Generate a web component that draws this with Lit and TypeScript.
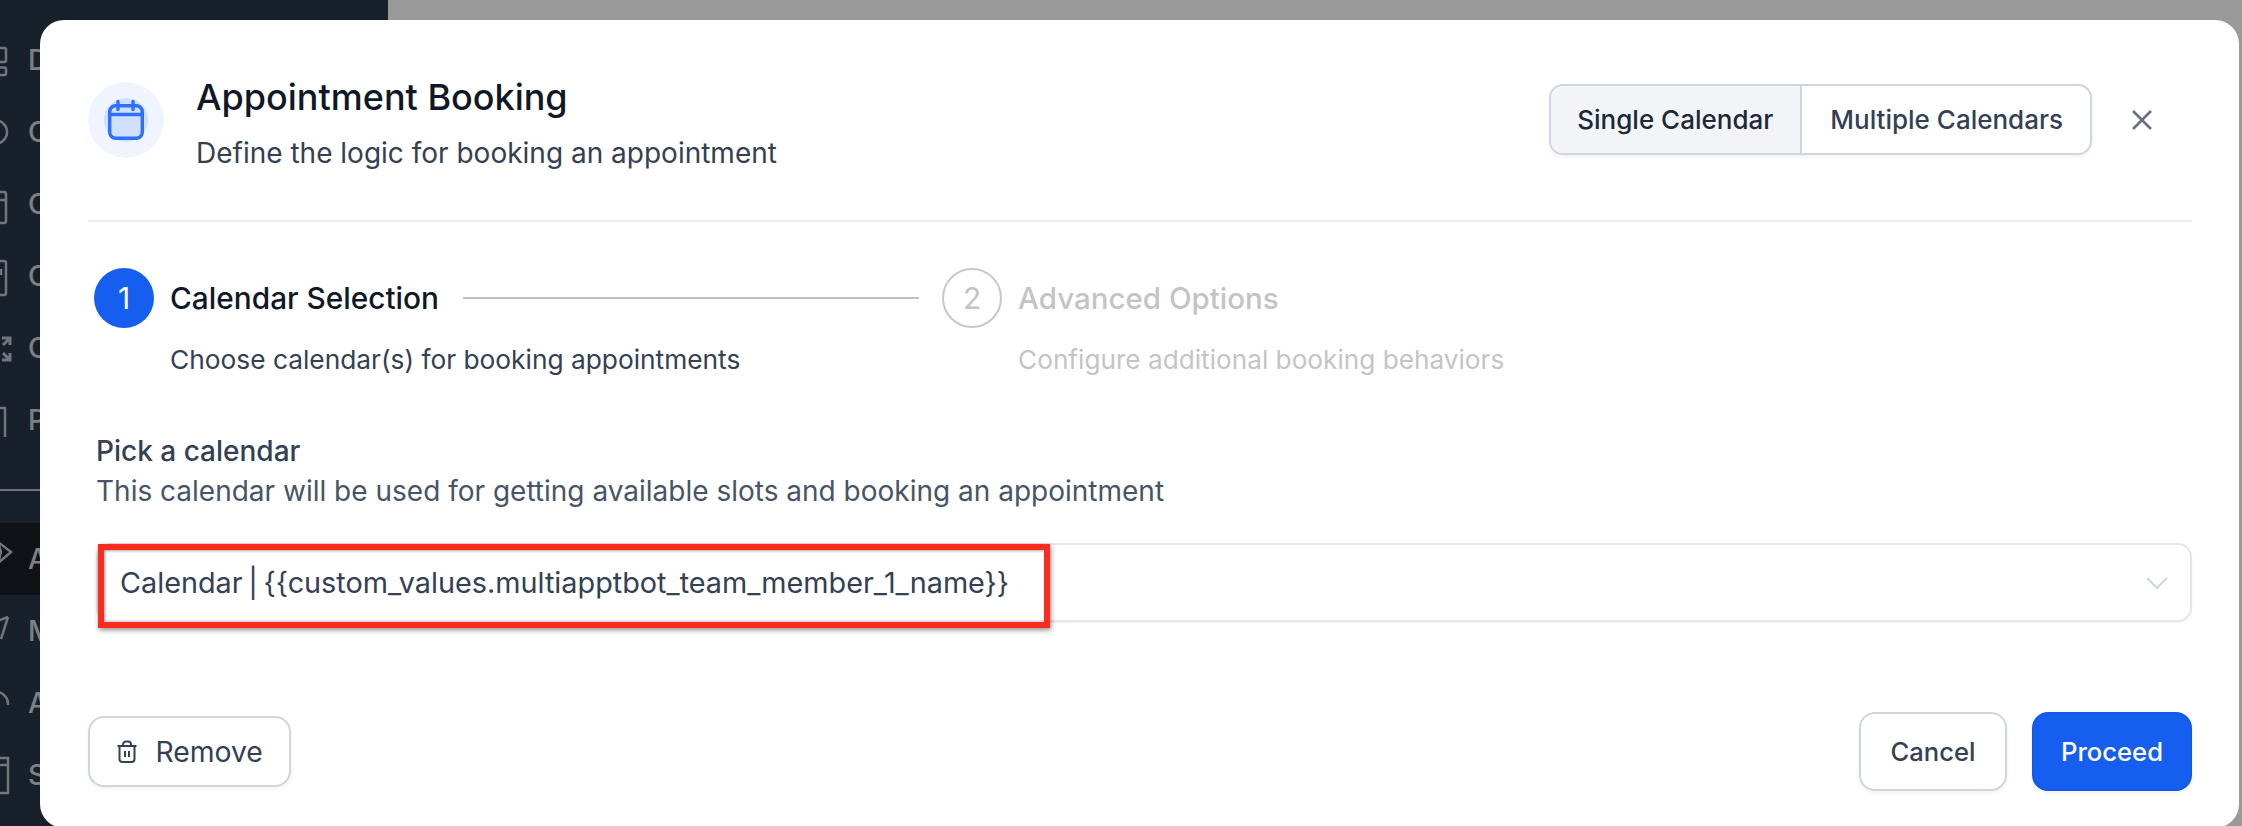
import { LitElement, html, css, svg } from 'lit';
import { customElement } from 'lit/decorators.js';

const navTop = [
    { label: 'Dashboard', icon: svg`<rect x="-8" y="3" width="14" height="14" rx="1.5"/><rect x="-8" y="22.5" width="14" height="7.5" rx="1.5"/>` },
    { label: 'Conversations', icon: svg`<circle cx="-5" cy="15" r="12"/>` },
    { label: 'Calendars', icon: svg`<rect x="-10" y="3" width="16" height="31" rx="2"/><path d="M-10 11H6"/>` },
    { label: 'Contacts', icon: svg`<rect x="-10" y="0" width="16" height="34" rx="2"/><path d="M1 8v6"/>` },
    { label: 'Opportunities', icon: svg`<path stroke-width="3" d="M2 5h8v7M10 5l-7 7M2 27h8v-7M10 27l-7-7"/>` },
    { label: 'Payments', icon: svg`<path d="M-6 3H6M5 3v29"/>` },
];
const navBottom = [
    { label: 'AI Agents', active: true, icon: svg`<path d="M-2 -2L11 8-2 19l3-11z"/>` },
    { label: 'Marketing', active: false, icon: svg`<path d="M8 1L1 23M8 1L-8 7"/>` },
    { label: 'Automation', active: false, icon: svg`<path d="M-4 4a12 12 0 0 1 12 13"/>` },
    { label: 'Sites', active: false, icon: svg`<path d="M-10-2H8v35H-10M-10 5H8"/>` },
];

@customElement('app-root')
export class AppRoot extends LitElement {
    static styles = css`
        :host {
            display: block;
            position: relative;
            width: 2242px;
            height: 826px;
            overflow: hidden;
            background: #999a99;
            font-family: Inter, 'Liberation Sans', sans-serif;
        }
        .sidebar {
            width: 388px;
            height: 826px;
            background: #18202c;
            color: #7d8084;
            font-size: 28px;
            font-weight: 500;
            box-sizing: border-box;
            padding-top: 24px;
        }
        .nav-item {
            display: flex;
            align-items: center;
            height: 72px;
            white-space: nowrap;
        }
        .nav-item svg {
            width: 30px;
            height: 30px;
            margin-right: -2px;
            fill: none;
            stroke: #72757a;
            stroke-width: 2.5;
            overflow: visible;
            flex: none;
        }
        .nav-item.active {
            background: #0f1216;
        }
        .nav-rule {
            height: 2px;
            background: #6d7074;
            margin: 33px 0 32px;
        }
        .modal {
            position: absolute;
            left: 40px;
            top: 20px;
            width: 2199px;
            height: 808px;
            box-sizing: border-box;
            padding: 62px 47px 0 48px;
            background: #fff;
            border-radius: 24px;
            display: flex;
            flex-direction: column;
        }
        .header {
            display: flex;
            align-items: flex-start;
            height: 138px;
            border-bottom: 2px solid #eaecf0;
        }
        .icon-halo {
            width: 76px;
            height: 76px;
            border-radius: 50%;
            background: #eff4ff;
            display: flex;
            align-items: center;
            justify-content: center;
            flex: none;
        }
        .icon-halo .inner {
            width: 44px;
            height: 44px;
            border-radius: 50%;
            background: #d1e0ff;
            display: flex;
            align-items: center;
            justify-content: center;
        }
        .titles {
            margin-left: 32px;
            flex: 1;
        }
        h1 {
            margin: -7px 0 0;
            font-size: 36px;
            line-height: 44px;
            font-weight: 500;
            color: #101828;
        }
        .titles p {
            margin: 15px 0 0;
            font-size: 28px;
            line-height: 38px;
            color: #344054;
        }
        .toggle {
            display: flex;
            height: 71px;
            box-sizing: border-box;
            margin-top: 2px;
            border: 2px solid #d0d5dd;
            border-radius: 14px;
            overflow: hidden;
            box-shadow: 0 2px 4px rgba(16, 24, 40, 0.06);
            font-size: 26px;
            font-weight: 500;
            color: #344054;
        }
        .toggle div {
            display: flex;
            align-items: center;
            padding: 0 27px 0 28px;
        }
        .toggle .on {
            padding: 0 27px 0 26px;
            background: #f2f4f7;
            color: #1d2939;
            border-right: 2px solid #d0d5dd;
        }
        .close {
            width: 28px;
            height: 28px;
            margin: 24px 36px 0 36px;
            stroke: #667085;
            stroke-width: 2.6;
            fill: none;
            flex: none;
        }
        .steps {
            display: flex;
            margin: 46px 0 0 6px;
        }
        .step {
            display: grid;
            grid-template-columns: 60px auto;
            column-gap: 16px;
            align-items: center;
        }
        .dot {
            width: 60px;
            height: 60px;
            box-sizing: border-box;
            border-radius: 50%;
            background: #155eef;
            color: #fff;
            font-size: 30px;
            display: flex;
            align-items: center;
            justify-content: center;
        }
        .step-title {
            font-size: 29.8px;
            font-weight: 500;
            color: #101828;
            white-space: nowrap;
        }
        /* width 0 so the longer sub text runs under the connector line, not pushing it */
        .step-sub {
            grid-column: 2;
            width: 0;
            margin-top: 16px;
            font-size: 26.3px;
            line-height: 32px;
            color: #344054;
            white-space: nowrap;
        }
        .step.off .dot {
            background: transparent;
            border: 2px solid #c8c8c8;
            color: #c4c4c4;
        }
        .step.off .step-title {
            font-size: 29.5px;
            color: #c4c4c4;
        }
        .step.off .step-sub {
            font-size: 26.2px;
            color: #c4c4c4;
        }
        .line {
            width: 456px;
            height: 2px;
            margin: 29px 23px 0 24px;
            background: #c0c0c0;
        }
        .field {
            margin: 57px 0 0 8px;
        }
        .field-label {
            font-size: 28px;
            line-height: 36px;
            font-weight: 500;
            color: #344054;
        }
        .field-hint {
            margin-top: 4px;
            font-size: 28px;
            line-height: 36px;
            color: #475467;
        }
        .select {
            position: relative;
            display: flex;
            align-items: center;
            justify-content: space-between;
            height: 79px;
            box-sizing: border-box;
            margin-top: 34px;
            padding: 0 22px;
            border: 2px solid #e4e7ec;
            border-radius: 14px;
            box-shadow: 0 1px 2px rgba(16, 24, 40, 0.05);
            font-size: 28.8px;
            word-spacing: -2.5px;
            color: #344054;
        }
        .select svg {
            width: 22px;
            height: 12px;
            stroke: #d0d5dd;
            stroke-width: 2;
            fill: none;
        }
        .highlight {
            position: absolute;
            left: 0;
            top: -1px;
            width: 952px;
            height: 84px;
            box-sizing: border-box;
            border: 6px solid #fb2c1e;
            box-shadow: 1px 2px 5px rgba(0, 0, 0, 0.45), inset 1px 1px 3px rgba(0, 0, 0, 0.35);
        }
        .footer {
            display: flex;
            align-items: center;
            margin-top: 90px;
        }
        .btn {
            display: flex;
            align-items: center;
            justify-content: center;
            box-sizing: border-box;
            border: 2px solid #d0d5dd;
            border-radius: 16px;
            background: #fff;
            box-shadow: 0 2px 4px rgba(16, 24, 40, 0.06);
            font-size: 25.6px;
            font-weight: 500;
            color: #344054;
        }
        .remove {
            justify-content: flex-start;
            width: 203px;
            height: 71px;
            padding-left: 25px;
            gap: 16.5px;
            font-size: 28.3px;
            font-weight: 400;
        }
        .remove svg {
            width: 24px;
            height: 24px;
            stroke: #344054;
            stroke-width: 2;
            fill: none;
        }
        .cancel {
            width: 148px;
            height: 79px;
            margin-left: auto;
        }
        .proceed {
            width: 160px;
            height: 79px;
            margin-left: 25px;
            background: #155eef;
            border-color: #0f5be8;
            color: #fff;
        }
    `;

    render() {
        return html`
            <div class="sidebar">
                ${navTop.map(item => html`
                    <div class="nav-item"><svg viewBox="0 0 30 30">${item.icon}</svg>${item.label}</div>
                `)}
                <div class="nav-rule"></div>
                ${navBottom.map(item => html`
                    <div class="nav-item ${item.active ? 'active' : ''}"><svg viewBox="0 0 30 30">${item.icon}</svg>${item.label}</div>
                `)}
            </div>
            <div class="modal">
                <div class="header">
                    <div class="icon-halo">
                        <div class="inner">
                            <svg width="40" height="44" viewBox="0 0 40 44" fill="none" stroke="#2e6fff" stroke-width="3.4" stroke-linecap="round">
                                <rect x="3.7" y="7.7" width="32.6" height="32.6" rx="6"/>
                                <path d="M3.7 16.5h32.6M12 3.5v8M27 3.5v8"/>
                            </svg>
                        </div>
                    </div>
                    <div class="titles">
                        <h1>Appointment Booking</h1>
                        <p>Define the logic for booking an appointment</p>
                    </div>
                    <div class="toggle">
                        <div class="on">Single Calendar</div>
                        <div>Multiple Calendars</div>
                    </div>
                    <svg class="close" viewBox="0 0 28 28"><path d="M5 5l18 18M23 5L5 23"/></svg>
                </div>
                <div class="steps">
                    <div class="step">
                        <div class="dot">1</div>
                        <div class="step-title">Calendar Selection</div>
                        <div class="step-sub">Choose calendar(s) for booking appointments</div>
                    </div>
                    <div class="line"></div>
                    <div class="step off">
                        <div class="dot">2</div>
                        <div class="step-title">Advanced Options</div>
                        <div class="step-sub">Configure additional booking behaviors</div>
                    </div>
                </div>
                <div class="field">
                    <div class="field-label">Pick a calendar</div>
                    <div class="field-hint">This calendar will be used for getting available slots and booking an appointment</div>
                    <div class="select">
                        <span>Calendar | {{custom_values.multiapptbot_team_member_1_name}}</span>
                        <svg viewBox="0 0 22 12"><path d="M1 1l10 10L21 1"/></svg>
                        <div class="highlight"></div>
                    </div>
                </div>
                <div class="footer">
                    <div class="btn remove">
                        <svg viewBox="0 0 24 24"><path d="M2.5 6h19M8 6V4.5a3 3 0 0 1 3-3h2a3 3 0 0 1 3 3V6M4.5 6v13a3 3 0 0 0 3 3h9a3 3 0 0 0 3-3V6M10 11v6M14 11v6"/></svg>
                        Remove
                    </div>
                    <div class="btn cancel">Cancel</div>
                    <div class="btn proceed">Proceed</div>
                </div>
            </div>
        `;
    }
}
